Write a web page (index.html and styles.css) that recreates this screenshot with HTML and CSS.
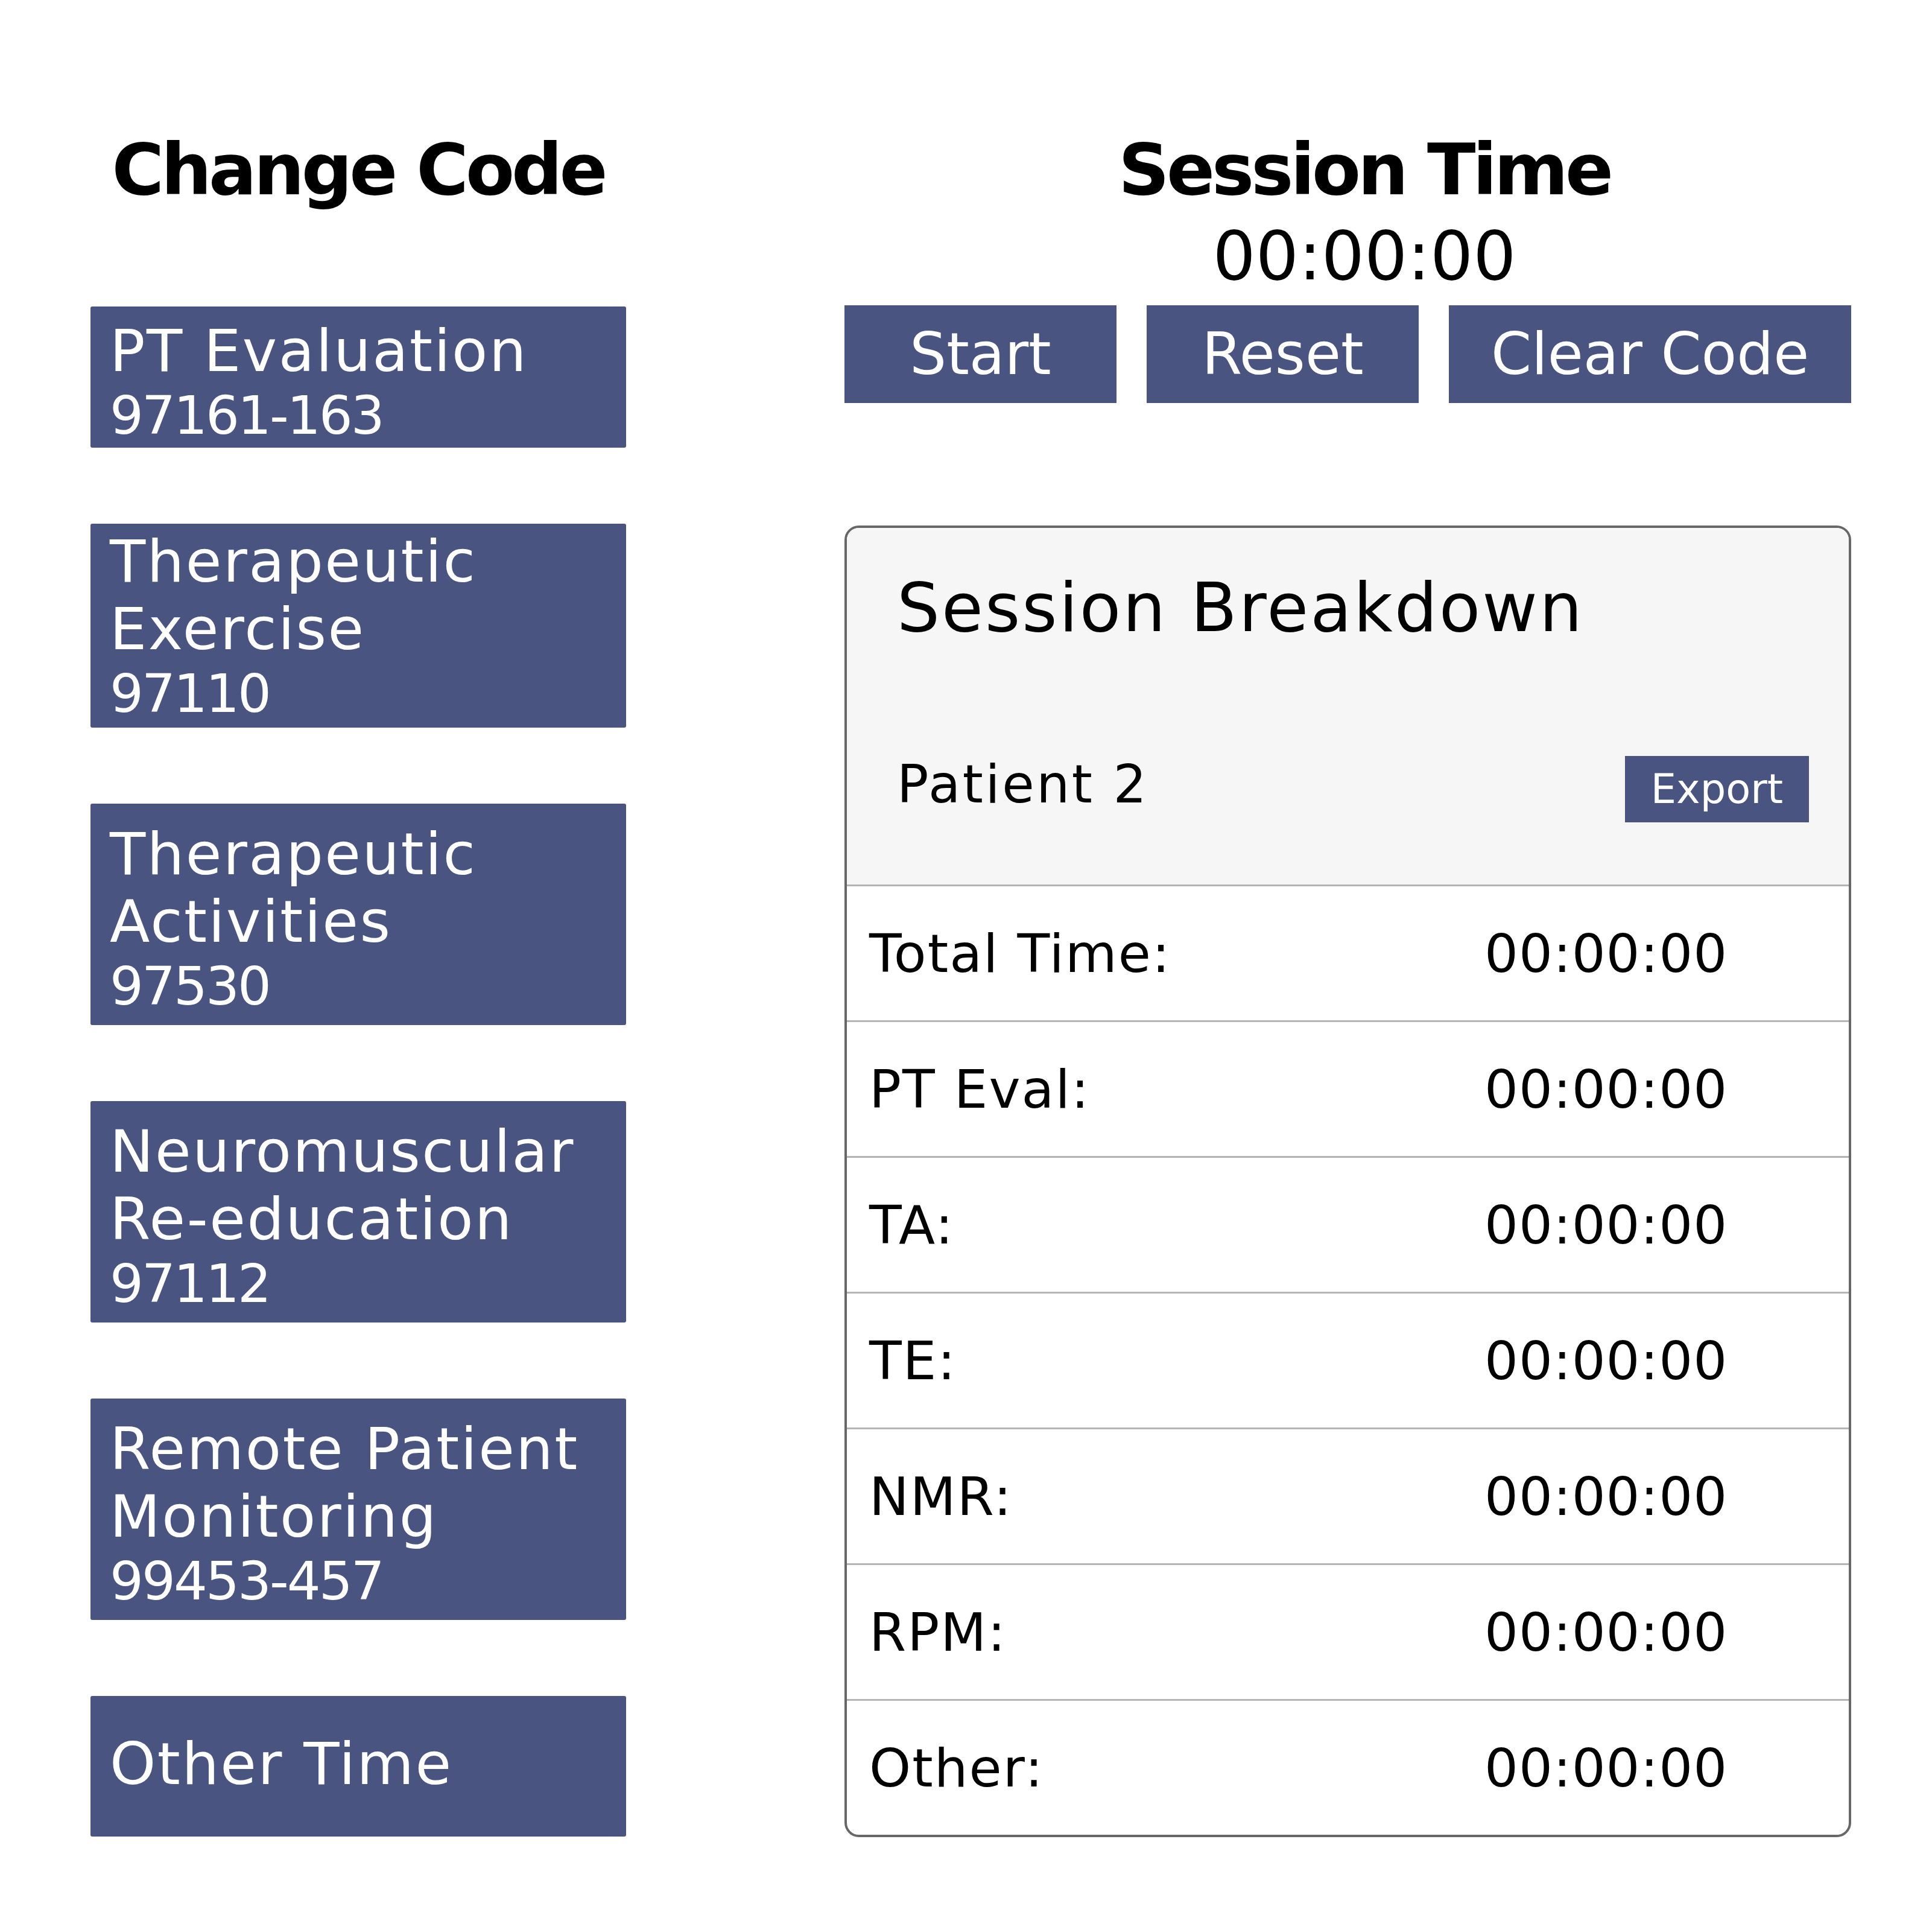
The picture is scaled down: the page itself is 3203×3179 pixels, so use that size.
FILE: index.html
```html
<!DOCTYPE html>
<html lang="en">
<head>
<meta charset="utf-8">
<title>Session Timer</title>
<link rel="stylesheet" href="styles.css">
</head>
<body>
<div class="page">
  <section class="col col-codes">
    <h1 class="title">Change Code</h1>
    <div class="code-list">
      <button class="code code--eval"><span class="code-name">PT Evaluation</span><span class="code-num">97161-163</span></button>
      <button class="code code--ex"><span class="code-name">Therapeutic Exercise</span><span class="code-num">97110</span></button>
      <button class="code code--tall"><span class="code-name">Therapeutic Activities</span><span class="code-num">97530</span></button>
      <button class="code code--tall"><span class="code-name">Neuromuscular Re-education</span><span class="code-num">97112</span></button>
      <button class="code code--tall"><span class="code-name">Remote Patient Monitoring</span><span class="code-num">99453-457</span></button>
      <button class="code code--other"><span class="code-name">Other Time</span></button>
    </div>
  </section>

  <section class="col col-session">
    <h1 class="title">Session Time</h1>
    <div class="timer">00:00:00</div>
    <div class="controls">
      <button class="ctl">Start</button>
      <button class="ctl">Reset</button>
      <button class="ctl">Clear Code</button>
    </div>

    <div class="breakdown">
      <div class="bd-head">
        <h2 class="bd-title">Session Breakdown</h2>
        <div class="bd-patient">
          <span class="bd-patient-name">Patient 2</span>
          <button class="export">Export</button>
        </div>
      </div>
      <div class="bd-row"><span class="bd-label">Total Time:</span><span class="bd-value">00:00:00</span></div>
      <div class="bd-row"><span class="bd-label">PT Eval:</span><span class="bd-value">00:00:00</span></div>
      <div class="bd-row"><span class="bd-label">TA:</span><span class="bd-value">00:00:00</span></div>
      <div class="bd-row"><span class="bd-label">TE:</span><span class="bd-value">00:00:00</span></div>
      <div class="bd-row"><span class="bd-label">NMR:</span><span class="bd-value">00:00:00</span></div>
      <div class="bd-row"><span class="bd-label">RPM:</span><span class="bd-value">00:00:00</span></div>
      <div class="bd-row"><span class="bd-label">Other:</span><span class="bd-value">00:00:00</span></div>
    </div>
  </section>
</div>
</body>
</html>
```

FILE: styles.css
```css
html, body {
  margin: 0;
  padding: 0;
  background: #ffffff;
}

body {
  font-family: "DejaVu Sans", "Liberation Sans", sans-serif;
  color: #000000;
}

button {
  font-family: inherit;
  border: 0;
  margin: 0;
  cursor: pointer;
}

.page {
  display: flex;
  align-items: flex-start;
  gap: 362px;
  padding: 211px 0 0 150px;
}

.col-codes {
  width: 888px;
  flex: none;
}

.col-session {
  width: 1724px;
  flex: none;
}

.title {
  margin: 0;
  font-size: 118px;
  font-weight: 700;
  line-height: 140px;
  letter-spacing: -5px;
  text-align: center;
}

/* ---- code buttons ---- */
.code-list {
  margin-top: 157px;
  display: flex;
  flex-direction: column;
  gap: 126px;
}

.code {
  display: block;
  width: 100%;
  box-sizing: border-box;
  background: #495480;
  color: #ffffff;
  border-radius: 3px;
  text-align: left;
  padding: 27.5px 30px 13.5px 32px;
}

.code-name {
  display: block;
  font-size: 97px;
  line-height: 112px;
  letter-spacing: 2.5px;
}

.code-num {
  display: block;
  font-size: 88px;
  line-height: 102px;
  letter-spacing: -3px;
}

.code--ex {
  padding-top: 6.5px;
  padding-bottom: 5.5px;
}

.code--eval {
  padding-top: 17.5px;
  padding-bottom: 2.5px;
}

.code--other {
  padding-top: 56.5px;
  padding-bottom: 64.5px;
}

/* ---- timer ---- */
.timer {
  margin-top: 13px;
  font-size: 112px;
  line-height: 120px;
  text-align: center;
}

.controls {
  margin-top: 22px;
  display: flex;
  gap: 50px;
}

.ctl {
  height: 162px;
  min-width: 451px;
  box-sizing: border-box;
  padding: 0 70px;
  background: #495480;
  color: #ffffff;
  font-size: 96px;
  display: flex;
  align-items: center;
  justify-content: center;
}

/* ---- breakdown card ---- */
.breakdown {
  margin-top: 203px;
  width: 1669px;
  box-sizing: border-box;
  border: 4px solid #676767;
  border-radius: 24px;
  overflow: hidden;
  background: #ffffff;
}

.bd-head {
  background: #f6f6f6;
  padding: 67px 66px 103px 83px;
}

.bd-title {
  margin: 0;
  font-size: 112px;
  font-weight: 400;
  line-height: 130px;
  letter-spacing: 3px;
}

.bd-patient {
  margin-top: 181px;
  display: flex;
  justify-content: space-between;
  align-items: flex-start;
}

.bd-patient-name {
  font-size: 87px;
  line-height: 94px;
  letter-spacing: 3.5px;
}

.export {
  height: 110px;
  padding: 0 43px;
  background: #495480;
  color: #ffffff;
  font-size: 67px;
  display: flex;
  align-items: center;
}

.bd-row {
  display: grid;
  grid-template-columns: 1020px auto;
  align-items: center;
  height: 222px;
  border-top: 3px solid #b4b4b4;
  padding-left: 37px;
  font-size: 88px;
}

.bd-label {
  letter-spacing: 2px;
}

.bd-value {
  letter-spacing: 1px;
}
```
